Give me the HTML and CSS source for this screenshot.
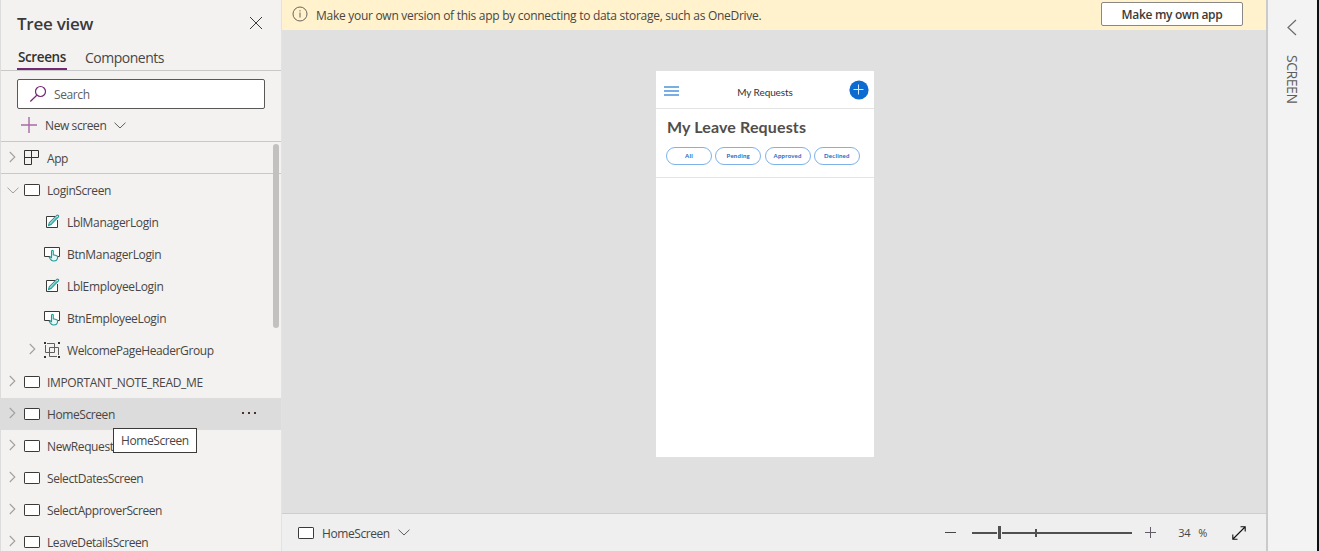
FILE: index.html
```
<!DOCTYPE html>
<html lang="en">
<head>
<meta charset="utf-8">
<title>Tree view</title>
<link rel="stylesheet" href="styles.css">
</head>
<body>
<svg class="defs" width="0" height="0">
  <symbol id="right" viewBox="0 0 7 12"><path d="M.8 1l5 5-5 5" fill="none" stroke="#a19f9d" stroke-width="1.1"/></symbol>
  <symbol id="down" viewBox="0 0 12 7"><path d="M.5 .7l5.500 5.300 5.500-5.300" fill="none" stroke="currentColor" stroke-width="1"/></symbol>
  <symbol id="screen" viewBox="0 0 16 12"><rect x=".5" y=".5" width="15" height="11" rx=".6" fill="#fff" stroke="#3b3a39"/></symbol>
  <symbol id="app" viewBox="0 0 16 16"><path d="M.5 .5h14v7h-7v7h-7zM7.500 .5v7M.5 7.500h7" fill="none" stroke="#323130"/></symbol>
  <symbol id="label" viewBox="0 0 16 16"><path d="M11 2.500H2.500v11h11V6" fill="#fff" stroke="#3b3a39"/><path d="M4.600 11.500l.7-2.600 7.500-7.500q.8-.6 1.500.1t.1 1.500L7 10.600z" fill="#e8f8f7" stroke="#1a9c98" stroke-width="1.100"/><path d="M5.800 10.500l7-7.300" stroke="#1a9c98" stroke-width=".6"/></symbol>
  <symbol id="button" viewBox="0 0 16 16"><path d="M6 10.500H.5v-9h15v9h-2" fill="#fff" stroke="#3b3a39"/><path d="M7.500 10.500V5.200q0-1 .9-1t.9 1v3.600l2.900.7q1.500.4 1.400 1.800-.1 3.700-3.900 3.700-2.200 0-3.400-2l-1-1.800q.8-.9 2.200.3z" fill="#e8f8f7" stroke="#1a9c98" stroke-width="1.100"/></symbol>
  <symbol id="group" viewBox="0 0 16 16"><path d="M3 1.500h7.500v9h-9V3M5.500 13V5.500h9V13M13 14.500H5.500V13" fill="none" stroke="#605e5c"/><path d="M0 0h2v2H0zM14 0h2v2h-2zM0 14h2v2H0zM14 14h2v2h-2z" fill="#323130"/></symbol>
</svg>
<div class="studio">
  <aside class="tree">
    <header class="tree-head"><h1>Tree view</h1><svg width="14" height="14" viewBox="0 0 14 14"><path d="M1 1l12 12M13 1L1 13" stroke="#3b3a39"/></svg></header>
    <nav class="tabs"><span class="tab active">Screens</span><span class="tab comp">Components</span></nav>
    <div class="search"><svg width="18" height="18" viewBox="0 0 18 18" fill="none" stroke="#742774" stroke-width="1.200"><circle cx="11.500" cy="6.500" r="5"/><path d="M7.800 10.200L1.300 16.500"/></svg><span>Search</span></div>
    <div class="new"><svg width="16" height="16" viewBox="0 0 16 16"><path d="M8 0v16M0 8h16" stroke="#a66ba6" stroke-width="1.400"/></svg><span>New screen</span><svg class="dark" width="12" height="7"><use href="#down"/></svg></div>
    <div class="list">
      <div class="row app"><svg class="chev" width="7" height="12"><use href="#right"/></svg><svg class="icon" width="16" height="16"><use href="#app"/></svg><span>App</span></div>
      <div class="row"><svg class="chev open" width="12" height="7"><use href="#down"/></svg><svg class="icon" width="16" height="12"><use href="#screen"/></svg><span>LoginScreen</span></div>
      <div class="row child"><svg class="icon" width="16" height="16"><use href="#label"/></svg><span>LblManagerLogin</span></div>
      <div class="row child"><svg class="icon" width="16" height="16"><use href="#button"/></svg><span>BtnManagerLogin</span></div>
      <div class="row child"><svg class="icon" width="16" height="16"><use href="#label"/></svg><span>LblEmployeeLogin</span></div>
      <div class="row child"><svg class="icon" width="16" height="16"><use href="#button"/></svg><span>BtnEmployeeLogin</span></div>
      <div class="row nested"><svg class="chev" width="7" height="12"><use href="#right"/></svg><svg class="icon" width="16" height="16"><use href="#group"/></svg><span>WelcomePageHeaderGroup</span></div>
      <div class="row"><svg class="chev" width="7" height="12"><use href="#right"/></svg><svg class="icon" width="16" height="12"><use href="#screen"/></svg><span class="caps">IMPORTANT_NOTE_READ_ME</span></div>
      <div class="row selected"><svg class="chev" width="7" height="12"><use href="#right"/></svg><svg class="icon" width="16" height="12"><use href="#screen"/></svg><span>HomeScreen</span><svg class="more" width="16" height="4"><path d="M1 1h2v2H1zM7 1h2v2H7zM13 1h2v2h-2z" fill="#4a3228"/></svg></div>
      <div class="row"><svg class="chev" width="7" height="12"><use href="#right"/></svg><svg class="icon" width="16" height="12"><use href="#screen"/></svg><span>NewRequest</span></div>
      <div class="row"><svg class="chev" width="7" height="12"><use href="#right"/></svg><svg class="icon" width="16" height="12"><use href="#screen"/></svg><span>SelectDatesScreen</span></div>
      <div class="row"><svg class="chev" width="7" height="12"><use href="#right"/></svg><svg class="icon" width="16" height="12"><use href="#screen"/></svg><span>SelectApproverScreen</span></div>
      <div class="row"><svg class="chev" width="7" height="12"><use href="#right"/></svg><svg class="icon" width="16" height="12"><use href="#screen"/></svg><span>LeaveDetailsScreen</span></div>
      <div class="scrollbar"></div>
      <div class="tooltip">HomeScreen</div>
    </div>
  </aside>
  <main class="work">
    <div class="notice"><svg width="16" height="16" viewBox="0 0 16 16"><circle cx="8" cy="8" r="7" fill="none" stroke="#69645a"/><path d="M8 6.500v5M8 4.200v1.200" stroke="#69645a"/></svg><span>Make your own version of this app by connecting to data storage, such as OneDrive.</span><button>Make my own app</button></div>
    <div class="canvas">
      <div class="phone">
        <div class="phone-head"><svg class="menu" width="16" height="10" viewBox="0 0 16 10"><path d="M0 1h15M0 5h15M0 9h15" stroke="#4e93dc" stroke-width="1.400"/></svg><span>My Requests</span><svg class="add" width="20" height="20" viewBox="0 0 20 20"><circle cx="10" cy="10" r="9.600" fill="#0b6bd0"/><path d="M9.500 4.500v10M4.500 9.500h10" stroke="#d6e9ff" stroke-width="1"/></svg></div>
        <div class="phone-body"><h2>My Leave Requests</h2><div class="pills"><span>All</span><span>Pending</span><span>Approved</span><span>Declined</span></div></div>
      </div>
    </div>
    <footer class="status"><svg width="16" height="12"><use href="#screen"/></svg><span class="current">HomeScreen</span><svg class="dark" width="12" height="7"><use href="#down"/></svg>
      <div class="zoom"><svg width="12" height="12"><path d="M0 5.500h11" stroke="#484644"/></svg><svg class="slider" width="160" height="16" viewBox="0 0 160 16"><path d="M0 8h160" stroke="#505050" stroke-width="2"/><path d="M25 1h5v14h-5z" fill="#efefef"/><path d="M26 1h3v13h-3zM63 4h2v8h-2z" fill="#505050"/></svg><svg width="12" height="12"><path d="M0 5.500h11M5.500 0v11" stroke="#625b68"/></svg><span class="num">34</span><span class="pct">%</span><svg class="fit" width="14" height="14" viewBox="0 0 14 14"><path d="M1 13L13 1M8.500 .8H13.200V5.500M.8 8.500v4.700h4.700" fill="none" stroke="#111" stroke-width="1.100"/></svg></div>
    </footer>
  </main>
  <aside class="props"><svg width="10" height="17" viewBox="0 0 10 17"><path d="M9 1L1 8.500 9 16" fill="none" stroke="#6b6b6b" stroke-width="1.200"/></svg><span>SCREEN</span></aside>
</div>
</body>
</html>
```
FILE: styles.css
```
* { box-sizing: border-box; }
body { margin: 0; width: 1319px; height: 551px; overflow: hidden; font: 12px "Open Sans", "Noto Sans", sans-serif; color: #484644; }
svg { display: block; flex: none; }
.defs { position: absolute; }
span, h1, h2, button { white-space: nowrap; }
.studio { display: flex; height: 551px; border-right: 2px solid #0c1015; }
.tree { width: 282px; flex: none; background: #f3f2f1; border-left: 1px solid #dcdcdc; border-right: 1px solid #e2e2e2; overflow: hidden; }
.tree-head { height: 46px; padding: 0 18px 0 16px; display: flex; align-items: center; justify-content: space-between; }
.tree-head h1 { margin: 2px 0 0; font-size: 17px; font-weight: 600; line-height: 24px; letter-spacing: -.25px; color: #3b3a39; }
.tabs { height: 25px; padding-left: 16px; display: flex; gap: 18px; border-bottom: 1px solid #c8c8c8; font-size: 14px; }
.tab { height: 24px; line-height: 23px; }
.tab.active { width: 50px; padding-left: 1px; font-weight: 600; font-size: 13.500px; letter-spacing: -.4px; border-bottom: 2px solid #742774; color: #323130; }
.tab.comp { letter-spacing: -.5px; }
.search { width: 248px; height: 30px; margin: 8px 0 0 16px; padding-left: 11px; border: 1px solid #5a5856; border-radius: 2px; background: #fff; display: flex; align-items: center; gap: 7px; color: #605e5c; letter-spacing: -.4px; }
.search span { margin-top: 1px; }
.new { height: 32px; padding: 0 0 0 20px; display: flex; align-items: center; gap: 8px; letter-spacing: -.4px; }
.dark { color: #605e5c; }
.list { position: relative; border-top: 1px solid #c8c8c8; }
.row { height: 32px; display: flex; align-items: center; padding-left: 8px; letter-spacing: -.41px; }
.row span { line-height: 18px; margin-top: 2px; }
.row .caps { letter-spacing: -.34px; }
.row.app { border-bottom: 1px solid #c8c8c8; }
.row.child { padding-left: 43px; letter-spacing: -.34px; }
.row.nested { padding-left: 28px; }
.row.selected { background: #dcdcdc; }
.chev { margin-right: 8px; margin-top: -2px; color: #a19f9d; }
.chev.open { margin: 0 5px 0 -2px; }
.icon { margin-right: 7px; }
.more { margin: -2px 24px 0 auto; }
.scrollbar { position: absolute; right: 2px; top: 2px; width: 6px; height: 184px; border-radius: 3px; background: #c2c1c0; }
.tooltip { position: absolute; left: 112px; top: 286px; width: 84px; height: 25px; border: 1px solid #3b3a39; background: #fff; line-height: 24px; padding-left: 7px; letter-spacing: -.42px; }
.work { flex: 1; min-width: 0; display: flex; flex-direction: column; }
.notice { height: 30px; padding: 0 23px 0 10px; display: flex; align-items: center; background: #fff2cc; letter-spacing: -.28px; }
.notice svg { margin: -3px 8px 0 0; }
.notice button { width: 142px; height: 24px; margin: -2px 0 0 auto; padding: 1px 0 0; border: 1px solid #8a8886; border-radius: 2px; background: #fff; font: 600 12px "Open Sans", sans-serif; letter-spacing: -.32px; color: #3b3a39; }
.canvas { flex: 1; background: #e0e0e0; padding: 41px 0 0 374px; }
.phone { width: 218px; height: 386px; background: #fff; font-family: Lato, sans-serif; }
.phone-head { height: 38px; padding: 0 5px 0 8px; display: flex; align-items: center; justify-content: space-between; border-bottom: 1px solid #e4e4e4; font-size: 10px; color: #333; }
.phone-head .menu { margin-top: 3px; }
.phone-head .add { margin-top: 1px; }
.phone-head span { margin: 5px 0 0 1px; letter-spacing: -.1px; }
.phone-body { height: 69px; border-bottom: 1px solid #e4e4e4; padding: 8px 10px; }
.phone-body h2 { margin: 0 0 10px 1px; font-size: 16px; letter-spacing: .13px; line-height: 20px; font-weight: 700; color: #504e4c; }
.pills { display: flex; gap: 3.300px; }
.pills span { width: 46px; height: 18px; border: 1px solid #7eb2e8; border-radius: 9px; text-align: center; font-size: 6px; letter-spacing: .25px; line-height: 16px; font-weight: 700; color: #2167c4; }
.status { height: 38px; background: #efefef; border-top: 1px solid #cecece; padding: 0 20px 0 16px; display: flex; align-items: center; letter-spacing: -.42px; }
.current { margin: 2px 8px 0 8px; }
.zoom { margin-left: auto; display: flex; align-items: center; }
.slider { margin: 0 13px 0 15px; }
.num { margin-left: 21px; font-size: 11px; letter-spacing: -.25px; }
.pct { margin-left: 8px; font-size: 11px; }
.fit { margin-left: 25px; }
.props { width: 51px; flex: none; border-left: 2px solid #cacaca; background: #f3f3f3; padding: 19px 1px 0 0; display: flex; flex-direction: column; align-items: center; gap: 19px; color: #605e5c; }
.props span { writing-mode: vertical-rl; font-size: 14px; line-height: 16px; letter-spacing: -.45px; }
```
